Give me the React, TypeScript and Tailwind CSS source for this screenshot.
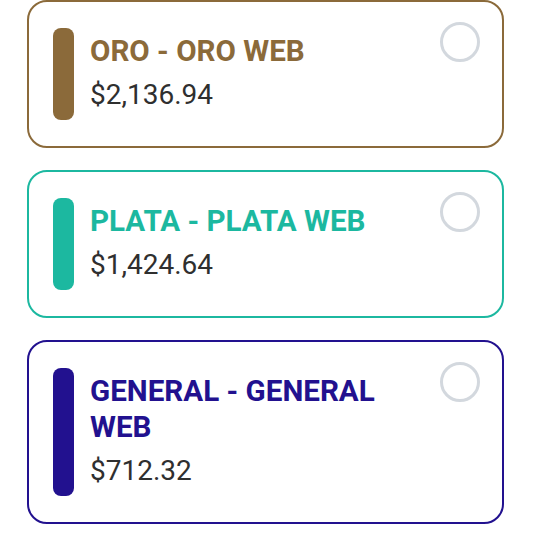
import React from "react";

type Plan = { title: string; price: string; text: string; border: string; bar: string };

const plans: Plan[] = [
  { title: "ORO - ORO WEB", price: "$2,136.94", text: "text-[#8b6a3a]", border: "border-[#8b6a3a]", bar: "bg-[#8b6a3a]" },
  { title: "PLATA - PLATA WEB", price: "$1,424.64", text: "text-[#1cb8a0]", border: "border-[#1cb8a0]", bar: "bg-[#1cb8a0]" },
  { title: "GENERAL - GENERAL WEB", price: "$712.32", text: "text-[#22118f]", border: "border-[#22118f]", bar: "bg-[#22118f]" },
];

export default function App() {
  return (
    <div
      className="w-[542px] h-[558px] bg-white flex flex-col gap-[22px] pl-[27px]"
      style={{ fontFamily: "Roboto, 'Liberation Sans', sans-serif" }}
    >
      {plans.map((p) => (
        <div
          key={p.title}
          className={`relative w-[477px] border-2 ${p.border} rounded-[20px] bg-white pl-6 pr-[26px] py-[26px] flex gap-4`}
        >
          <div className={`w-[21px] shrink-0 self-stretch rounded-lg ${p.bar}`} />
          <div className="flex flex-col pt-[5px] pb-[5px] pr-[80px]">
            <div className={`text-[29.6px] leading-[36px] font-bold ${p.text}`}>{p.title}</div>
            <div className="mt-[6px] text-[28px] leading-[40px] text-[#2f2f2f]">{p.price}</div>
          </div>
          <div className="absolute top-[20px] right-[22px] w-10 h-10 rounded-full border-[3px] border-[#d3d8de]" />
        </div>
      ))}
    </div>
  );
}
